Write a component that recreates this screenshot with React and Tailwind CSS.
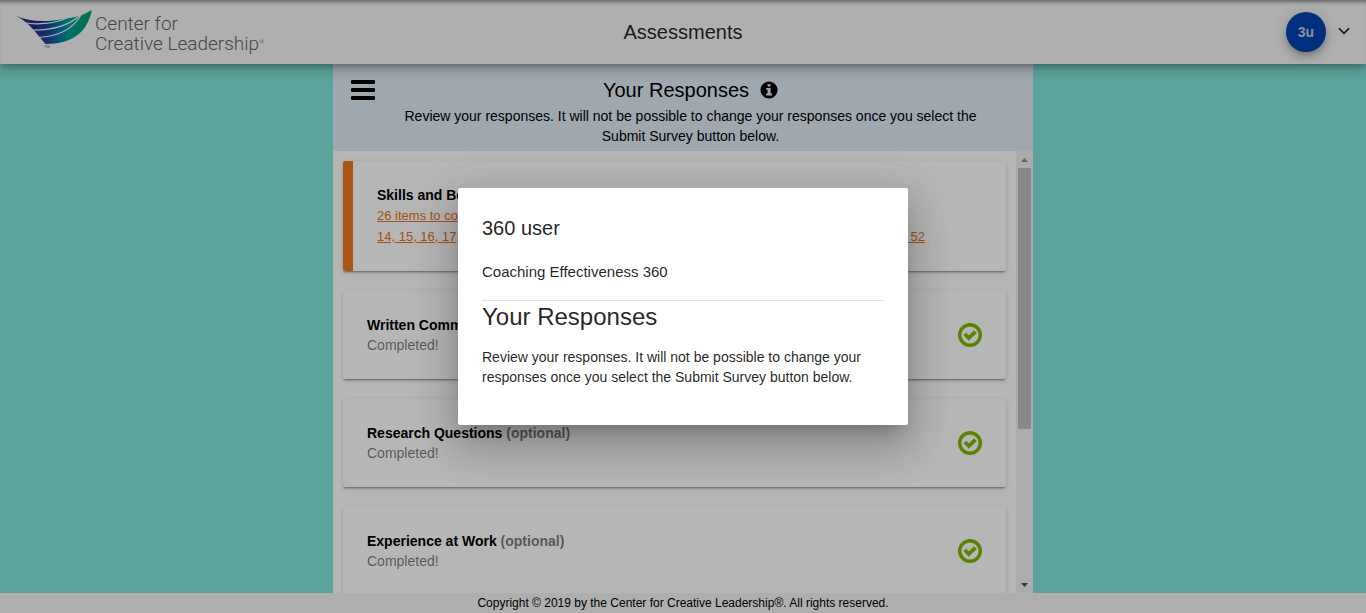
const pendingItems = [
  "14", "15", "16", "17", "20-21", "23", "25", "26", "28", "29", "31-32", "34", "35", "37", "38", "40", "41",
  "43", "44", "46", "48-49", "50", "52",
];

const sections = [
  { title: "Written Comments", optional: true },
  { title: "Research Questions", optional: true },
  { title: "Experience at Work", optional: true },
];

const cardShadow =
  "shadow-[0_3px_1px_-2px_rgba(0,0,0,0.2),0_2px_2px_0_rgba(0,0,0,0.14),0_1px_5px_0_rgba(0,0,0,0.12)]";

function Logo() {
  return (
    <a href="#home" className="flex items-start" aria-label="Center for Creative Leadership">
      <svg width="78" height="44" viewBox="0 0 78 44" aria-hidden="true">
        <defs>
          <linearGradient id="wing" gradientUnits="userSpaceOnUse" x1="10" y1="0" x2="76" y2="0">
            <stop offset="0" stopColor="#262a84" />
            <stop offset="0.28" stopColor="#1f3a93" />
            <stop offset="0.45" stopColor="#0a6aa6" />
            <stop offset="0.65" stopColor="#00a095" />
            <stop offset="1" stopColor="#009a72" />
          </linearGradient>
        </defs>
        <path
          fill="url(#wing)"
          d="M0 6 C13 11.5 30 12.5 47 9 C53 8 58 7.5 63 6 C68 4.5 72 2 76 0 C74 8 71 16 65 22 C57 30 46 34 29.5 34 C28 32 26 30 24.3 27.7 C21.5 24.5 19.5 22 17.5 20 C13 14.5 8 10 0 6 Z"
        />
        <g fill="none" stroke="#f5f5f5" strokeWidth="1.2">
          <path d="M7 12.5 C20 15 38 14 51 8" />
          <path d="M15 20 C34 20.5 52 16 64 5.5" />
          <path d="M22 27.5 C42 26.5 57 19 65 5" />
        </g>
        <text x="28" y="38" fontSize="4" fill="#6d7276" fontFamily="Liberation Sans, sans-serif">TM</text>
      </svg>
      <span className="flex flex-col pt-1 pl-px font-[Roboto,sans-serif] text-[19px] leading-5 font-light text-[#5f6468]">
        <span>Center for</span>
        <span className="flex">
          Creative Leadership<span className="text-[6px] leading-4">®</span>
        </span>
      </span>
    </a>
  );
}

function InfoIcon() {
  return (
    <svg width="18" height="18" viewBox="0 0 18 18" aria-hidden="true">
      <circle cx="9" cy="9" r="8.6" fill="#000" />
      <path d="M7.6 3.2 H10.6 V5.6 H7.6 Z M6.2 7 H10.6 V12.6 H12 V14.4 H6.2 V12.6 H7.6 V8.8 H6.2 Z" fill="#dfebf6" />
    </svg>
  );
}

function CheckIcon() {
  return (
    <svg width="24" height="24" viewBox="0 0 24 24" role="img" aria-label="Completed" className="shrink-0">
      <circle cx="12" cy="12" r="10.3" fill="none" stroke="#7fb800" strokeWidth="3.4" />
      <path d="M6.8 11 L10.8 15 L17.4 8.6" fill="none" stroke="#7fb800" strokeWidth="3.8" />
    </svg>
  );
}

function Scrollbar() {
  return (
    <div className="flex w-[17px] shrink-0 flex-col items-center bg-[#f1f1f1]" aria-hidden="true">
      <div className="flex h-[17px] shrink-0 items-center">
        <svg width="7" height="4" viewBox="0 0 7 4"><path d="M3.5 0 L7 4 H0 Z" fill="#8b8b8b" /></svg>
      </div>
      <div className="flex w-[13px] grow flex-col">
        <div className="h-[64%] bg-[#c1c1c1]" />
      </div>
      <div className="flex h-[17px] shrink-0 items-center">
        <svg width="7" height="4" viewBox="0 0 7 4"><path d="M0 0 H7 L3.5 4 Z" fill="#505050" /></svg>
      </div>
    </div>
  );
}

export default function App() {
  return (
    <div className="relative flex h-screen flex-col overflow-hidden bg-[#80e5db] font-[Liberation_Sans,Arial,sans-serif] text-sm text-black/87">
      <header className="relative z-10 grid h-16 shrink-0 grid-cols-[1fr_auto_1fr] items-center bg-[#f5f5f5] px-4 shadow-[0_3px_5px_-1px_rgba(0,0,0,0.2),0_6px_10px_0_rgba(0,0,0,0.14),0_1px_18px_0_rgba(0,0,0,0.12),inset_0_5px_5px_-4px_rgba(0,0,0,0.6)]">
        <Logo />
        <h1 className="text-xl leading-8">Assessments</h1>
        <div className="flex items-center justify-end gap-3">
          <button
            type="button"
            className="size-10 rounded-full bg-[#0042b0] font-bold text-[#f5f5f5]/80 shadow-[0_3px_5px_-1px_rgba(0,0,0,0.2),0_6px_10px_0_rgba(0,0,0,0.14),0_1px_18px_0_rgba(0,0,0,0.12)]"
          >
            3u
          </button>
          <button type="button" aria-label="Account menu">
            <svg width="12" height="12" viewBox="0 0 12 12"><path d="M1 2.4 L6 7.4 L11 2.4" fill="none" stroke="#222" strokeWidth="1.7" /></svg>
          </button>
        </div>
      </header>

      <main className="mx-auto flex min-h-0 w-full max-w-[700px] grow flex-col bg-white">
        <div className="flex shrink-0 items-start gap-4 bg-[#dfebf6] pt-3 pr-[43px] pb-[5px] pl-[18px] text-black">
          <button type="button" aria-label="Menu" className="mt-1">
            <svg width="24" height="20" viewBox="0 0 24 20">
              <rect width="24" height="4" rx="1" />
              <rect y="8" width="24" height="4" rx="1" />
              <rect y="16" width="24" height="4" rx="1" />
            </svg>
          </button>
          <div className="grow text-center">
            <h2 className="flex items-center justify-center gap-[11px] text-xl leading-7">
              Your Responses
              <button type="button" aria-label="More information"><InfoIcon /></button>
            </h2>
            <p className="mt-[2px] leading-5">
              Review your responses. It will not be possible to change your responses once you select the Submit
              Survey button below.
            </p>
          </div>
        </div>

        <div className="flex min-h-0 grow">
          <div className="flex min-w-0 grow flex-col gap-5 overflow-hidden p-[10px]">
            <section className={`shrink-0 rounded-[2px] border-l-[10px] border-[#f07820] bg-white p-6 ${cardShadow}`}>
              <h3 className="leading-5 font-bold text-black">Skills and Behaviors</h3>
              <a href="#items" className="block text-[13px] leading-[21px] whitespace-nowrap text-[#e87020] underline">
                26 items to complete
                <br />
                {pendingItems.join(", ")}
              </a>
            </section>
            {sections.map((s) => (
              <section
                key={s.title}
                className={`flex shrink-0 items-center justify-between rounded-[2px] bg-white p-6 ${cardShadow}`}
              >
                <div className="leading-5">
                  <h3 className="font-bold text-black">
                    {s.title} {s.optional && <span className="text-black/54">(optional)</span>}
                  </h3>
                  <p className="text-black/54">Completed!</p>
                </div>
                <CheckIcon />
              </section>
            ))}
          </div>
          <Scrollbar />
        </div>
      </main>

      <footer className="shrink-0 bg-[#f5f5f5] text-center text-xs leading-5 text-black">
        Copyright © 2019 by the Center for Creative Leadership®. All rights reserved.
      </footer>

      <div className="absolute inset-0 z-20 flex items-center justify-center bg-black/[0.288]">
        <div
          role="dialog"
          aria-modal="true"
          aria-labelledby="dialog-title"
          className="w-[450px] rounded-[2px] bg-white p-6 shadow-[0_11px_15px_-7px_rgba(0,0,0,0.2),0_24px_38px_3px_rgba(0,0,0,0.14),0_9px_46px_8px_rgba(0,0,0,0.12)]"
        >
          <h2 id="dialog-title" className="text-xl leading-8">360 user</h2>
          <p className="mt-4 text-[15px] leading-6">Coaching Effectiveness 360</p>
          <hr className="mt-4 border-black/12" />
          <h2 className="text-2xl leading-8">Your Responses</h2>
          <p className="mt-[14px] mb-[14px] leading-5">
            Review your responses. It will not be possible to change your responses once you select the Submit Survey
            button below.
          </p>
        </div>
      </div>
    </div>
  );
}
